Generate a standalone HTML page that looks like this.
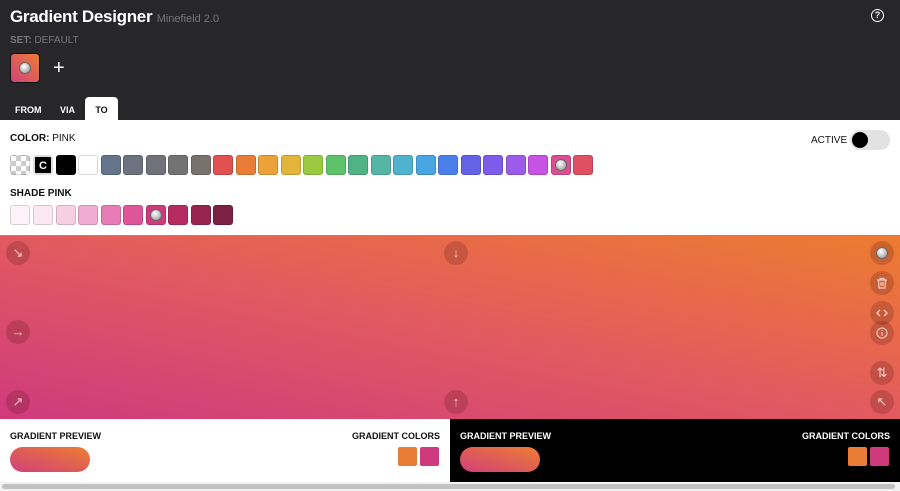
<!DOCTYPE html>
<html><head><style>
*{box-sizing:border-box;margin:0;padding:0}
body{width:900px;height:491px;overflow:hidden;font-family:"Liberation Sans",sans-serif;background:#fff;position:relative}
.hdr{position:absolute;left:0;top:0;width:900px;height:120px;background:#272729}
.t{position:absolute;left:10px;top:7px;color:#fff;font-weight:bold;font-size:17px;letter-spacing:-0.3px}
.t span{font-weight:normal;font-size:11px;color:#777;letter-spacing:0}
.set{position:absolute;left:10px;top:35px;font-size:10px;color:#777}
.sw0{position:absolute;left:10px;top:53px;width:30px;height:30px;border-radius:4px;background:linear-gradient(to top right,#d0447a,#ec7b35);border:1px solid #111}
.dot{position:absolute;width:12px;height:12px;border-radius:50%;background:radial-gradient(circle at 40% 35%,#fff,#bbb 60%,#888);border:1px solid #666}
.plus{position:absolute;left:53px;top:57px;color:#fff;font-size:20px}
.tab{position:absolute;top:97px;height:23px;font-size:9px;font-weight:bold;color:#fff;padding-top:8px}
.q{position:absolute;left:871px;top:9px;width:13px;height:13px;border:1.5px solid #fff;border-radius:50%;color:#fff;font-size:9px;font-weight:bold;text-align:center;line-height:10px}
.lbl{position:absolute;font-size:10px;font-weight:bold;color:#111}
.s{position:absolute;width:20px;height:20px;border-radius:3px;border:1px solid rgba(0,0,0,.15)}
.grad{position:absolute;left:0;top:235px;width:900px;height:184px;background:linear-gradient(to top right,#cf3a7d,#e25a60 50%,#ee7c30);border-top:1px solid #e07a2f}
.c{position:absolute;width:24px;height:24px;border-radius:50%;background:rgba(80,20,20,.22);color:#f3d0c8;font-size:13px;text-align:center;line-height:24px}
.c svg{position:absolute;left:6px;top:6px}
.bp{position:absolute;top:419px;height:63px;width:450px}
.pill{position:absolute;left:10px;top:28px;width:80px;height:25px;border-radius:13px;background:linear-gradient(to top right,#d0407a,#ee7d30)}
.gc{position:absolute;top:28px;width:19px;height:19px;border-radius:2px}
</style></head><body>
<div class="hdr">
<div class="t">Gradient Designer <span>Minefield 2.0</span></div>
<div class="set"><b>SET:</b> DEFAULT</div>
<div class="sw0"><div class="dot" style="left:8px;top:8px"></div></div>
<div class="plus">+</div>
<div class="tab" style="left:15px">FROM</div>
<div class="tab" style="left:60px">VIA</div>
<div class="tab" style="left:85px;width:33px;background:#fff;color:#111;text-align:center;border-radius:4px 4px 0 0">TO</div>
<div class="q">?</div>
</div>
<div class="lbl" style="left:10px;top:133px">COLOR: <span style="font-weight:normal">PINK</span></div>
<div style="position:absolute;left:811px;top:135px;font-size:10px;color:#111">ACTIVE</div>
<div style="position:absolute;left:850px;top:130px;width:40px;height:20px;border-radius:10px;background:#e2e2e2"><div style="position:absolute;left:2px;top:2px;width:16px;height:16px;border-radius:50%;background:#000"></div></div>
<div class="s" style="left:10px;top:155px;background:repeating-conic-gradient(#ccc 0 25%,#fff 0 50%) 0 0/10px 10px"></div>
<div class="s" style="left:33px;top:155px;background:#000;color:#fff;font-weight:bold;font-size:11px;text-align:center;line-height:18px;border:2px solid #ddd">C</div>
<div class="s" style="left:56px;top:155px;background:#000"></div>
<div class="s" style="left:78px;top:155px;background:#fff"></div>
<div class="s" style="left:101px;top:155px;background:#64748b"></div>
<div class="s" style="left:123px;top:155px;background:#6b7280"></div>
<div class="s" style="left:146px;top:155px;background:#71717a"></div>
<div class="s" style="left:168px;top:155px;background:#737373"></div>
<div class="s" style="left:191px;top:155px;background:#78716c"></div>
<div class="s" style="left:213px;top:155px;background:#e0514f"></div>
<div class="s" style="left:236px;top:155px;background:#ea7d35"></div>
<div class="s" style="left:258px;top:155px;background:#eca23a"></div>
<div class="s" style="left:281px;top:155px;background:#e2b53a"></div>
<div class="s" style="left:303px;top:155px;background:#9aca40"></div>
<div class="s" style="left:326px;top:155px;background:#5ec26a"></div>
<div class="s" style="left:348px;top:155px;background:#4fb386"></div>
<div class="s" style="left:371px;top:155px;background:#55b5a6"></div>
<div class="s" style="left:393px;top:155px;background:#4fb2cf"></div>
<div class="s" style="left:416px;top:155px;background:#48a5e2"></div>
<div class="s" style="left:438px;top:155px;background:#4b80ea"></div>
<div class="s" style="left:461px;top:155px;background:#6563e5"></div>
<div class="s" style="left:483px;top:155px;background:#7c5ce9"></div>
<div class="s" style="left:506px;top:155px;background:#9b5cea"></div>
<div class="s" style="left:528px;top:155px;background:#c753e5"></div>
<div class="s" style="left:551px;top:155px;background:#db4f92"><div class="dot" style="left:3px;top:3px"></div></div>
<div class="s" style="left:573px;top:155px;background:#e04f62"></div>
<div class="lbl" style="left:10px;top:188px">SHADE PINK</div>
<div class="s" style="left:10px;top:205px;background:#fdf2f8"></div>
<div class="s" style="left:33px;top:205px;background:#fce7f3"></div>
<div class="s" style="left:56px;top:205px;background:#f6cfe5"></div>
<div class="s" style="left:78px;top:205px;background:#f0acd3"></div>
<div class="s" style="left:101px;top:205px;background:#e87cb6"></div>
<div class="s" style="left:123px;top:205px;background:#df5599"></div>
<div class="s" style="left:146px;top:205px;background:#cf3a7d"><div class="dot" style="left:3px;top:3px"></div></div>
<div class="s" style="left:168px;top:205px;background:#b52c62"></div>
<div class="s" style="left:191px;top:205px;background:#97244f"></div>
<div class="s" style="left:213px;top:205px;background:#7c2244"></div>
<div class="grad">
<div class="c" style="left:6px;top:5px">↘</div>
<div class="c" style="left:444px;top:5px">↓</div>
<div class="c" style="left:6px;top:84px">→</div>
<div class="c" style="left:6px;top:154px">↗</div>
<div class="c" style="left:444px;top:154px">↑</div>
<div class="c" style="left:870px;top:5px"><div class="dot" style="left:6px;top:6px"></div></div>
<div class="c" style="left:870px;top:35px"><svg width="12" height="12" viewBox="0 0 12 12" fill="none" stroke="#f3d0c8" stroke-width="1.2"><path d="M1 3h10M4 3V1.5h4V3M2.5 3l.5 8h6l.5-8M5 5v4M7 5v4"/></svg></div>
<div class="c" style="left:870px;top:65px"><svg width="12" height="12" viewBox="0 0 12 12" fill="none" stroke="#f3d0c8" stroke-width="1.3"><path d="M4 3L1 6l3 3M8 3l3 3-3 3"/></svg></div>
<div class="c" style="left:870px;top:85px"><svg width="12" height="12" viewBox="0 0 12 12" fill="none" stroke="#f3d0c8" stroke-width="1.1"><circle cx="6" cy="6" r="5"/><path d="M6 5v4M6 3v1"/></svg></div>
<div class="c" style="left:870px;top:125px">⇅</div>
<div class="c" style="left:870px;top:154px">↖</div>
</div>
<div class="bp" style="left:0;background:#fff">
<div class="lbl" style="left:10px;top:12px;font-size:9px">GRADIENT PREVIEW</div>
<div class="lbl" style="right:10px;top:12px;font-size:9px">GRADIENT COLORS</div>
<div class="pill"></div>
<div class="gc" style="left:398px;background:#ea7d35"></div>
<div class="gc" style="left:420px;background:#cf3a7d"></div>
</div>
<div class="bp" style="left:450px;background:#000">
<div class="lbl" style="left:10px;top:12px;font-size:9px;color:#fff">GRADIENT PREVIEW</div>
<div class="lbl" style="right:10px;top:12px;font-size:9px;color:#fff">GRADIENT COLORS</div>
<div class="pill"></div>
<div class="gc" style="left:398px;background:#ea7d35"></div>
<div class="gc" style="left:420px;background:#cf3a7d"></div>
</div>
<div style="position:absolute;left:0;top:482px;width:900px;height:9px;background:#f2f2f2"><div style="position:absolute;left:2px;top:2px;width:893px;height:5px;border-radius:3px;background:#c1c1c1"></div></div>
</body></html>
